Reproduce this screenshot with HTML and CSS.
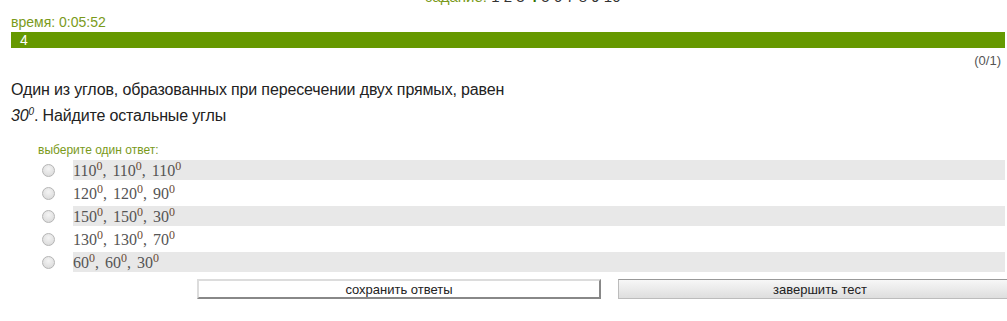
FILE: index.html
```html
<!DOCTYPE html>
<html lang="ru">
<head>
<meta charset="utf-8">
<link rel="stylesheet" href="styles.css">
</head>
<body>
<div class="page">
  <div class="tasks"><span class="lbl">задание:</span> <span class="n">1</span> <span class="n">2</span> <span class="n">3</span> <span class="n cur">4</span> <span class="n">5</span> <span class="n">6</span> <span class="n">7</span> <span class="n">8</span> <span class="n">9</span> <span class="n">10</span></div>
  <div class="timer">время: 0:05:52</div>
  <div class="bar">4</div>
  <div class="score">(0/1)</div>
  <div class="question">Один из углов, образованных при пересечении двух прямых, равен<br><i>30<sup>0</sup></i>. Найдите остальные углы</div>
  <div class="choose">выберите один ответ:</div>
  <div class="options">
    <label class="opt shade"><span class="radio"></span><span class="ans">110<sup>0</sup>, 110<sup>0</sup>, 110<sup>0</sup></span></label>
    <label class="opt"><span class="radio"></span><span class="ans">120<sup>0</sup>, 120<sup>0</sup>, 90<sup>0</sup></span></label>
    <label class="opt shade"><span class="radio"></span><span class="ans">150<sup>0</sup>, 150<sup>0</sup>, 30<sup>0</sup></span></label>
    <label class="opt"><span class="radio"></span><span class="ans">130<sup>0</sup>, 130<sup>0</sup>, 70<sup>0</sup></span></label>
    <label class="opt shade"><span class="radio"></span><span class="ans">60<sup>0</sup>, 60<sup>0</sup>, 30<sup>0</sup></span></label>
  </div>
  <div class="buttons">
    <button class="btn save">сохранить ответы</button>
    <button class="btn finish">завершить тест</button>
  </div>
</div>
</body>
</html>
```
FILE: styles.css
```css
html, body {
  margin: 0;
  padding: 0;
  background: #fff;
  overflow: hidden;
}
body {
  font-family: "Liberation Sans", Arial, sans-serif;
  color: #222;
}
.page {
  padding: 0 2px 0 11px;
}
.tasks {
  margin-top: -10px;
  height: 14px;
  line-height: 14px;
  font-size: 15px;
  text-align: center;
  padding-left: 30px;
  color: #222;
}
.tasks .lbl { color: #7a9a1a; }
.tasks .n { color: #333; }
.tasks .cur { color: #2f6e00; font-weight: bold; }
.timer {
  margin-top: 10px;
  font-size: 14px;
  line-height: 16px;
  color: #7a9a1a;
}
.bar {
  margin-top: 2px;
  height: 16px;
  line-height: 16px;
  background: #669900;
  color: #fff;
  font-size: 14px;
  padding-left: 9px;
}
.score {
  text-align: right;
  font-size: 13px;
  line-height: 14px;
  color: #555;
  margin-top: 6px;
  padding-right: 4px;
}
.question {
  margin-top: 9px;
  font-size: 16px;
  line-height: 26px;
  color: #222;
  letter-spacing: -0.15px;
}
.question sup {
  font-size: 10px;
  line-height: 0;
}
.choose {
  margin-top: 15px;
  padding-left: 27px;
  font-size: 12px;
  line-height: 13px;
  color: #7a9a1a;
}
.options {
  margin-top: 3px;
  display: flex;
  flex-direction: column;
  gap: 3px;
}
.opt {
  display: flex;
  align-items: center;
  height: 20px;
}
.radio {
  width: 11px;
  height: 11px;
  border-radius: 50%;
  border: 1px solid #b5b5b5;
  background: radial-gradient(circle at 50% 35%, #f4f4f4, #d6d6d6);
  margin-left: 31px;
  margin-right: 18px;
  flex: none;
}
.ans {
  flex: 1;
  height: 20px;
  line-height: 21px;
  padding-left: 0;
  font-family: "Liberation Serif", "Times New Roman", serif;
  font-size: 16px;
  word-spacing: 2px;
  color: #555;
}
.opt.shade .ans {
  background: #e8e8e8;
}
.ans sup {
  font-size: 12px;
  line-height: 0;
  vertical-align: 6px;
  color: #6b4a34;
}
.buttons {
  display: flex;
  gap: 17px;
  margin-top: 7px;
  padding-left: 186px;
}
.btn {
  flex: none;
  width: 404px;
  height: 20px;
  font-family: "Liberation Sans", Arial, sans-serif;
  font-size: 13px;
  color: #222;
  padding: 0;
}
.save {
  background: #fff;
  border-style: solid;
  border-width: 2px;
  border-color: #dcdcdc #888 #888 #dcdcdc;
}
.finish {
  background: linear-gradient(#f7f7f7, #dedede);
  border: 1px solid #bcbcbc;
  border-top-color: #999;
}
```
